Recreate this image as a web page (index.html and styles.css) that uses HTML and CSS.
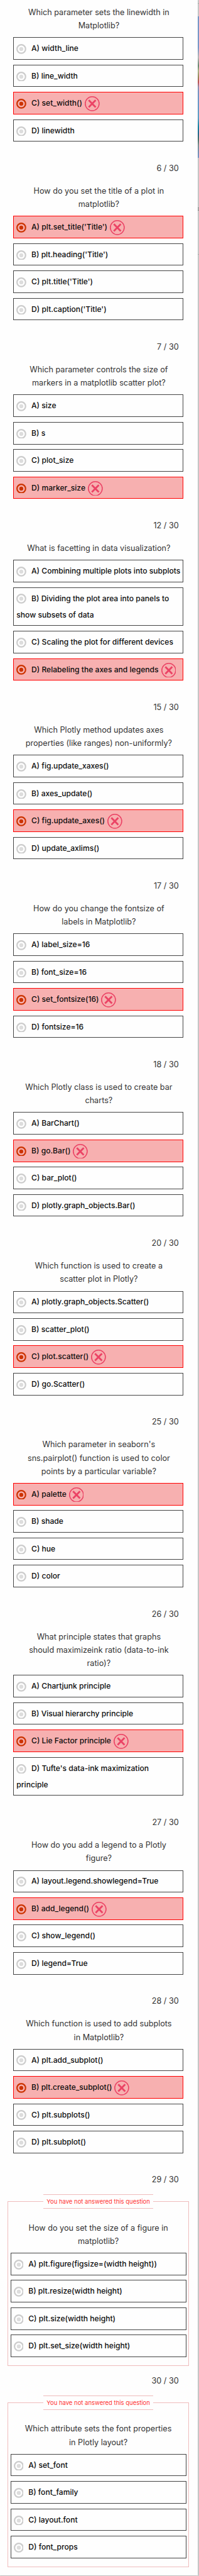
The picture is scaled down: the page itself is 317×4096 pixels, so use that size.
FILE: index.html
```
<!DOCTYPE html>
<html lang="en">
<head>
<meta charset="utf-8">
<title>Quiz results</title>
<link rel="stylesheet" href="styles.css">
</head>
<body>
<main class="panel" id="quiz"></main>
<aside class="backdrop"><div class="rule"></div><div class="photo"></div><div class="glyph"></div><div class="rule"></div></aside>
<script src="quiz.js"></script>
</body>
</html>
```
FILE: styles.css
```
html { font-size: 7.909px; }
* { box-sizing: border-box; }
body { margin: 0; height: 4096px; display: flex; overflow: hidden; background: #d0d0d0; font-family: Inter, "Liberation Sans", sans-serif; }
.panel { flex: none; width: 39.8rem; height: 517.8rem; background: #fefefe; padding-top: 1.125rem; box-shadow: 0 0 3px rgba(0,0,0,.2); z-index: 1; }
.backdrop { flex: 1; display: flex; flex-direction: column; padding-top: .6rem; }
.rule { height: 1px; background: #b4b4b4; }
.photo { height: 28.5rem; margin-top: 2.57rem; background: linear-gradient(#7f9fd2 0 22%, #c5c0c0 29%, #6f8f78 35%, #b5bb8e 38.5%, #a09060 43%, #c85858 46.5%, #9c98b8 50%, #7f9bcb 53%, #72a0d2 60%, #64a8cf 72%, #1a8bab 78%, #2a6f95 83%, #4f7770 87%, #84989a 91%, #7f99bd 96%, #7f9bd0); }
.glyph { height: .7rem; margin: 9.9rem 0 8.7rem; border: solid #8a8a8a; border-width: 1px 0; background: linear-gradient(transparent 40%, #8a8a8a 40% 60%, transparent 60%); }
.counter { margin: 4rem 3.8rem 1.85rem 0; text-align: right; font-size: 1.6rem; line-height: 2.7rem; color: #333; }
.question { margin: 0 4.5rem .975rem; display: flex; flex-direction: column; align-items: center; white-space: nowrap; font-size: 1.6rem; line-height: 2.7rem; color: #333; }
.options { display: flex; flex-direction: column; gap: 1rem; margin: 0 2.9rem 0 2.7rem; }
.option { height: 4.5rem; border: 1px solid #444; padding: .5rem; font-size: 1.53rem; line-height: 3.3rem; font-weight: 500; color: #0c0c0c; white-space: nowrap; }
.option.tall { height: 7.8rem; }
.option.wrong { border-color: #f00; background: #f7b0b0; }
.radio { width: 2rem; height: 2rem; vertical-align: middle; margin: 0 1rem 0 0; color: #ccc; }
.radio .dot { fill: #ddd; }
.wrong .radio { color: #cc3300; }
.wrong .radio .dot { fill: #cc3300; }
.cross { width: 3rem; height: 3rem; vertical-align: middle; margin: -.3rem 0 -.3rem .5rem; }
.unanswered { margin: 0 1.7rem 0 1.5rem; border: 1px solid #efbcbc; padding: 2.5rem .47rem 0; height: 34.5rem; min-width: 0; }
.unanswered .question { margin: 0 0 .975rem; }
.unanswered .options { margin: 0; }
.notice { width: 22.2rem; height: 2.9rem; margin: 0 auto; padding: 0; border: solid #efbcbc; border-width: 1px 0; text-align: center; white-space: nowrap; font-size: 1.2rem; line-height: 2.7rem; color: #f33; }
.counter.near { margin-bottom: 1.55rem; }
.unanswered + .counter { margin-top: 1.7rem; }
```
FILE: quiz.js
```
// n: question number, q: question lines, o: options, w: index of the wrong pick
const items = [
  { q: ["Which parameter sets the linewidth in", "Matplotlib?"], o: ["width_line", "line_width", "set_width()", "linewidth"], w: 2 },
  { n: 6, q: ["How do you set the title of a plot in", "matplotlib?"], o: ["plt.set_title('Title')", "plt.heading('Title')", "plt.title('Title')", "plt.caption('Title')"], w: 0 },
  { n: 7, q: ["Which parameter controls the size of", "markers in a matplotlib scatter plot?"], o: ["size", "s", "plot_size", "marker_size"], w: 3 },
  { n: 12, q: ["What is facetting in data visualization?"], o: ["Combining multiple plots into subplots", "Dividing the plot area into panels to|show subsets of data", "Scaling the plot for different devices", "Relabeling the axes and legends"], w: 3 },
  { n: 15, q: ["Which Plotly method updates axes", "properties (like ranges) non-uniformly?"], o: ["fig.update_xaxes()", "axes_update()", "fig.update_axes()", "update_axlims()"], w: 2 },
  { n: 17, q: ["How do you change the fontsize of", "labels in Matplotlib?"], o: ["label_size=16", "font_size=16", "set_fontsize(16)", "fontsize=16"], w: 2 },
  { n: 18, q: ["Which Plotly class is used to create bar", "charts?"], o: ["BarChart()", "go.Bar()", "bar_plot()", "plotly.graph_objects.Bar()"], w: 1 },
  { n: 20, q: ["Which function is used to create a", "scatter plot in Plotly?"], o: ["plotly.graph_objects.Scatter()", "scatter_plot()", "plot.scatter()", "go.Scatter()"], w: 2 },
  { n: 25, q: ["Which parameter in seaborn's", "sns.pairplot() function is used to color", "points by a particular variable?"], o: ["palette", "shade", "hue", "color"], w: 0 },
  { n: 26, q: ["What principle states that graphs", "should maximizeink ratio (data-to-ink", "ratio)?"], o: ["Chartjunk principle", "Visual hierarchy principle", "Lie Factor principle", "Tufte's data-ink maximization|principle"], w: 2 },
  { n: 27, q: ["How do you add a legend to a Plotly", "figure?"], o: ["layout.legend.showlegend=True", "add_legend()", "show_legend()", "legend=True"], w: 1 },
  { n: 28, q: ["Which function is used to add subplots", "in Matplotlib?"], o: ["plt.add_subplot()", "plt.create_subplot()", "plt.subplots()", "plt.subplot()"], w: 1 },
  { n: 29, q: ["How do you set the size of a figure in", "matplotlib?"], o: ["plt.figure(figsize=(width height))", "plt.resize(width height)", "plt.size(width height)", "plt.set_size(width height)"] },
  { n: 30, q: ["Which attribute sets the font properties", "in Plotly layout?"], o: ["set_font", "font_family", "layout.font", "font_props"] }
];
const radio = '<svg class="radio" viewBox="0 0 20 20" fill="none"><circle cx="10" cy="10" r="8.6" stroke="currentColor" stroke-width="2.8"/><circle class="dot" cx="10" cy="10" r="4"/></svg>';
const cross = '<svg class="cross" viewBox="0 0 30 30" fill="none" stroke="#eb4365"><circle cx="15" cy="15" r="14" stroke-width="2"/><path d="M8 8L22 22M22 8L8 22" stroke-width="3.6"/></svg>';
document.getElementById("quiz").innerHTML = items.map(({ n, q, o, w }) => {
  const open = w === undefined;
  const counter = n ? `<div class="counter${open ? " near" : ""}">${n} / 30</div>` : "";
  const body = `<div class="question">${q.map(l => `<span>${l}</span>`).join("")}</div><div class="options">` + o.map((t, i) =>
    `<div class="option${i === w ? " wrong" : ""}${t.includes("|") ? " tall" : ""}">${radio}${"ABCD"[i]}) ${t.replace("|", "<br>")}${i === w ? cross : ""}</div>`).join("") + "</div>";
  return counter + (open ? `<fieldset class="unanswered"><legend class="notice">You have not answered this question</legend>${body}</fieldset>` : body);
}).join("");
```
